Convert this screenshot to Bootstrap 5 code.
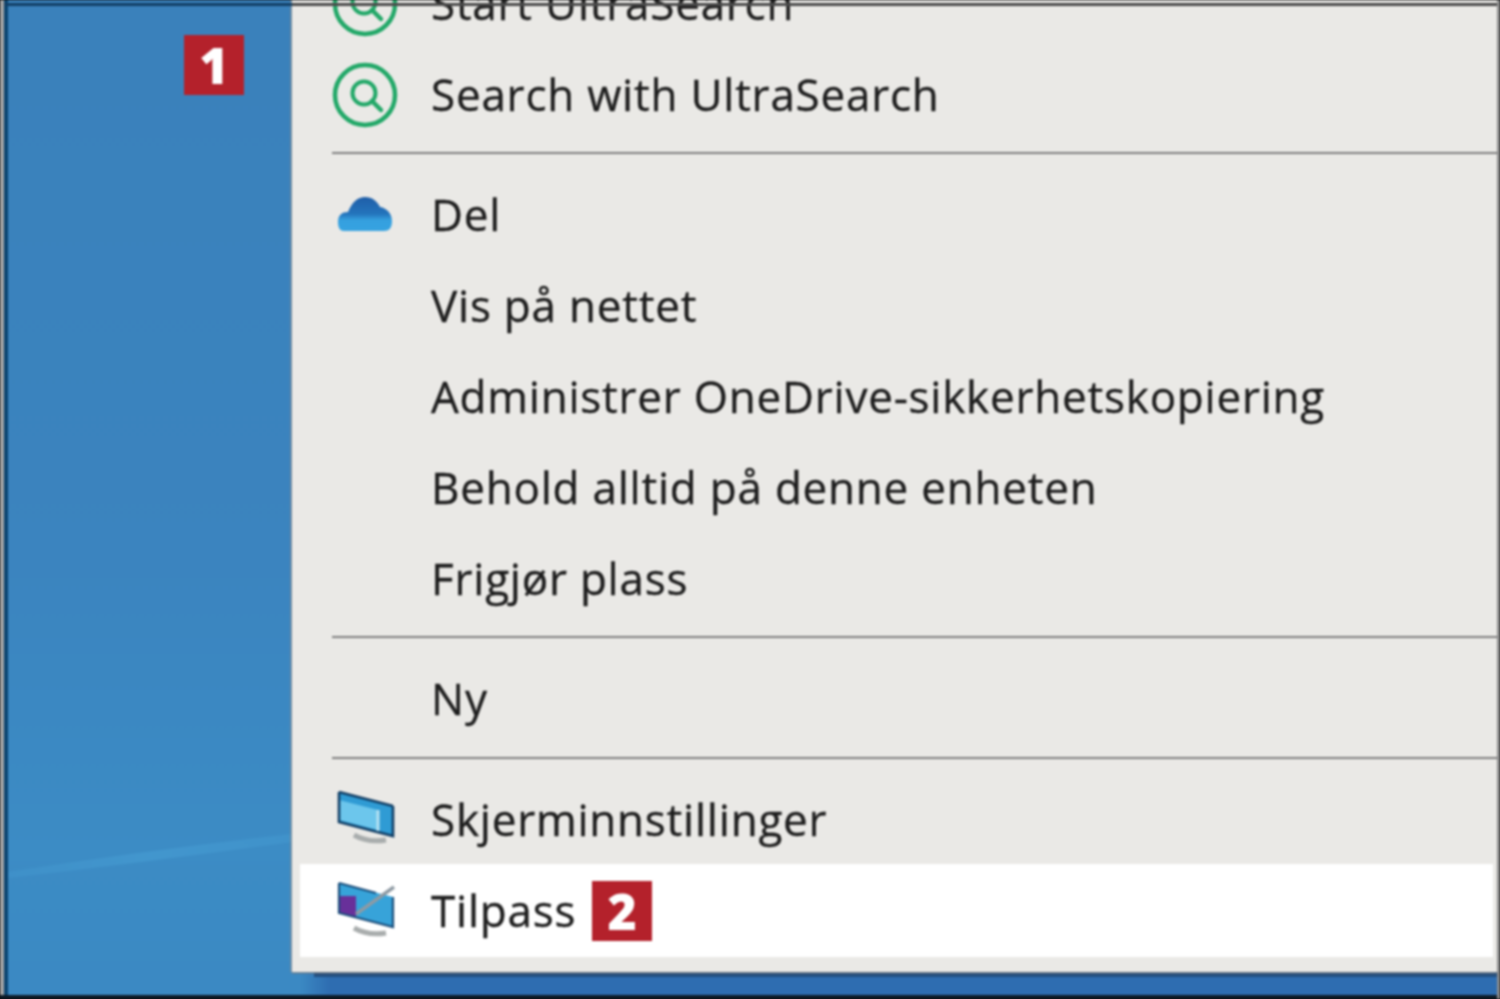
<!DOCTYPE html>
<html lang="nb">
<head>
<meta charset="utf-8">
<title>Tilpass</title>
<link href="https://cdn.jsdelivr.net/npm/bootstrap@5.3.0/dist/css/bootstrap.min.css" rel="stylesheet">
<style>
html,body{margin:0;height:999px;overflow:hidden;background:#111}
.shot{width:1500px;height:999px;overflow:hidden;position:relative;filter:blur(.8px);
  background:linear-gradient(180deg,#3a81bb 0%,#3b84bf 55%,#3c8cc5 85%,#3b89c3 100%);
  font-family:"Open Sans","Noto Sans",sans-serif;}
.streak{position:absolute;left:8px;top:820px;width:284px;height:60px}
.side{width:292px;padding:35px 0 0 184px;position:relative}
.tag{width:60px;height:60px;background:#b4212b;color:#fff;font-family:"Open Sans",sans-serif;font-weight:800;font-size:50px;line-height:60px;text-align:center;letter-spacing:0;flex:none;-webkit-text-stroke:0}
.ctx{width:1205px;height:1014px;margin-top:-42px;padding:0 4px 15px 8px;background:#eae9e6;color:#1d1d1d;
  box-shadow:-1px 0 2px #8f9499,0 1px 2px #777;flex:none;position:relative}
.rowi{height:91px;font-size:44px;letter-spacing:.78px;line-height:91px;padding-left:32px;-webkit-text-stroke:.35px #1d1d1d}
.rowi.on{background:#fff;height:93px;margin-top:-1px}
.ico{width:66px;margin-right:33px;flex:none}
.ico svg{display:block}
.sepa{height:2px;background:#7f7f7f;margin:12px -4px 15px 32px}
.sepa.nudge{margin-top:13px}
.tag2{margin-left:16px}
.strip{position:absolute;left:300px;right:0;top:972px;height:24px;background:linear-gradient(90deg,#3b89c3 0,#2e6db1 30px);}
.strip::before{content:"";position:absolute;left:14px;right:0;top:0;height:5px;background:#234f80}
.frame-l{position:absolute;left:0;top:0;bottom:0;width:8px;background:linear-gradient(90deg,#a5a5a5 0,#a5a5a5 4px,#0a4470 4px)}
.frame-t{position:absolute;left:4px;right:0;top:3px;height:3px;background:linear-gradient(90deg,#123f66 0,#123f66 288px,#4a4a4a 288px)}
.frame-b{position:absolute;left:0;right:0;bottom:0;height:4px;background:#0c1a26}
.frame-r{position:absolute;right:0;top:0;bottom:0;width:3px;background:#8c8c8c}
</style>
</head>
<body>
<div class="shot d-flex">
  <div class="strip"></div>
  <svg class="streak" viewBox="0 0 284 60" preserveAspectRatio="none"><defs><linearGradient id="st" x1="0" x2="1" y1="0" y2="0"><stop offset="0" stop-color="#4498cf" stop-opacity=".4"/><stop offset=".5" stop-color="#4499d0" stop-opacity=".8"/><stop offset="1" stop-color="#4499d0" stop-opacity=".5"/></linearGradient></defs><path d="M0 52 Q140 30 284 14 L284 22 Q140 42 0 58Z" fill="url(#st)"/></svg>
  <div class="side"><div class="tag">1</div></div>
  <div class="ctx">
    <div class="rowi d-flex align-items-center"><span class="ico"><svg width="66" height="66" viewBox="0 0 66 66"><circle cx="33" cy="33" r="30" fill="none" stroke="#22a868" stroke-width="4.5"/><circle cx="32" cy="31" r="11.5" fill="none" stroke="#22a868" stroke-width="4"/><path d="M40 39l9 9" stroke="#22a868" stroke-width="4.5" stroke-linecap="round"/></svg></span><span>Start UltraSearch</span></div>
    <div class="rowi d-flex align-items-center"><span class="ico"><svg width="66" height="66" viewBox="0 0 66 66"><circle cx="33" cy="33" r="30" fill="none" stroke="#22a868" stroke-width="4.5"/><circle cx="32" cy="31" r="11.5" fill="none" stroke="#22a868" stroke-width="4"/><path d="M40 39l9 9" stroke="#22a868" stroke-width="4.5" stroke-linecap="round"/></svg></span><span>Search with UltraSearch</span></div>
    <div class="sepa"></div>
    <div class="rowi d-flex align-items-center"><span class="ico"><svg width="66" height="40" viewBox="0 0 66 40"><defs><linearGradient id="cl" x1="0" y1="0" x2="0" y2="1"><stop offset="0" stop-color="#1f5ea8"/><stop offset=".5" stop-color="#2474bc"/><stop offset=".68" stop-color="#35a0df"/><stop offset="1" stop-color="#36a3e1"/></linearGradient></defs><path d="M12 36C7 36 6 31 6 27 6 20 10 17 16 17 20 7 26 2 33 2 40 2 45 6 48 12 55 13 60 19 60 26 60 33 57 36 52 36Z" fill="url(#cl)"/></svg></span><span>Del</span></div>
    <div class="rowi d-flex align-items-center"><span class="ico"></span><span>Vis på nettet</span></div>
    <div class="rowi d-flex align-items-center"><span class="ico"></span><span>Administrer OneDrive-sikkerhetskopiering</span></div>
    <div class="rowi d-flex align-items-center"><span class="ico"></span><span>Behold alltid på denne enheten</span></div>
    <div class="rowi d-flex align-items-center"><span class="ico"></span><span>Frigjør plass</span></div>
    <div class="sepa"></div>
    <div class="rowi d-flex align-items-center"><span class="ico"></span><span>Ny</span></div>
    <div class="sepa nudge"></div>
    <div class="rowi d-flex align-items-center"><span class="ico"><svg width="66" height="60" viewBox="0 0 66 60"><path d="M7 2L61 16V46L7 32Z" fill="#2f9bd4"/><path d="M7 10L46 20V40L7 30Z" fill="#6cc6ec"/><path d="M7 2L61 16M61 16V46L7 32V2" fill="none" stroke="#123f66" stroke-width="2.6"/><path d="M46 20V41" stroke="#b7e2f3" stroke-width="3"/><path d="M22 45q14 8 32 5" fill="none" stroke="#a9adad" stroke-width="5"/></svg></span><span>Skjerminnstillinger</span></div>
    <div class="rowi on d-flex align-items-center"><span class="ico"><svg width="66" height="60" viewBox="0 0 66 60"><path d="M7 2L61 16V46L7 32Z" fill="#37a3d9"/><path d="M7 15H24V36L7 32Z" fill="#68309a"/><path d="M7 2L44 12M61 16V46L7 32V2" fill="none" stroke="#1c4f7c" stroke-width="2.2"/><path d="M24 33L62 6" stroke="#8e9aa3" stroke-width="3.4"/><path d="M22 47q14 8 32 5" fill="none" stroke="#a9adad" stroke-width="5"/></svg></span><span>Tilpass</span><div class="tag tag2">2</div></div>
  </div>
  <div class="frame-l"></div><div class="frame-t"></div><div class="frame-b"></div><div class="frame-r"></div>
</div>
<script src="https://cdn.jsdelivr.net/npm/bootstrap@5.3.0/dist/js/bootstrap.bundle.min.js"></script>
</body>
</html>
